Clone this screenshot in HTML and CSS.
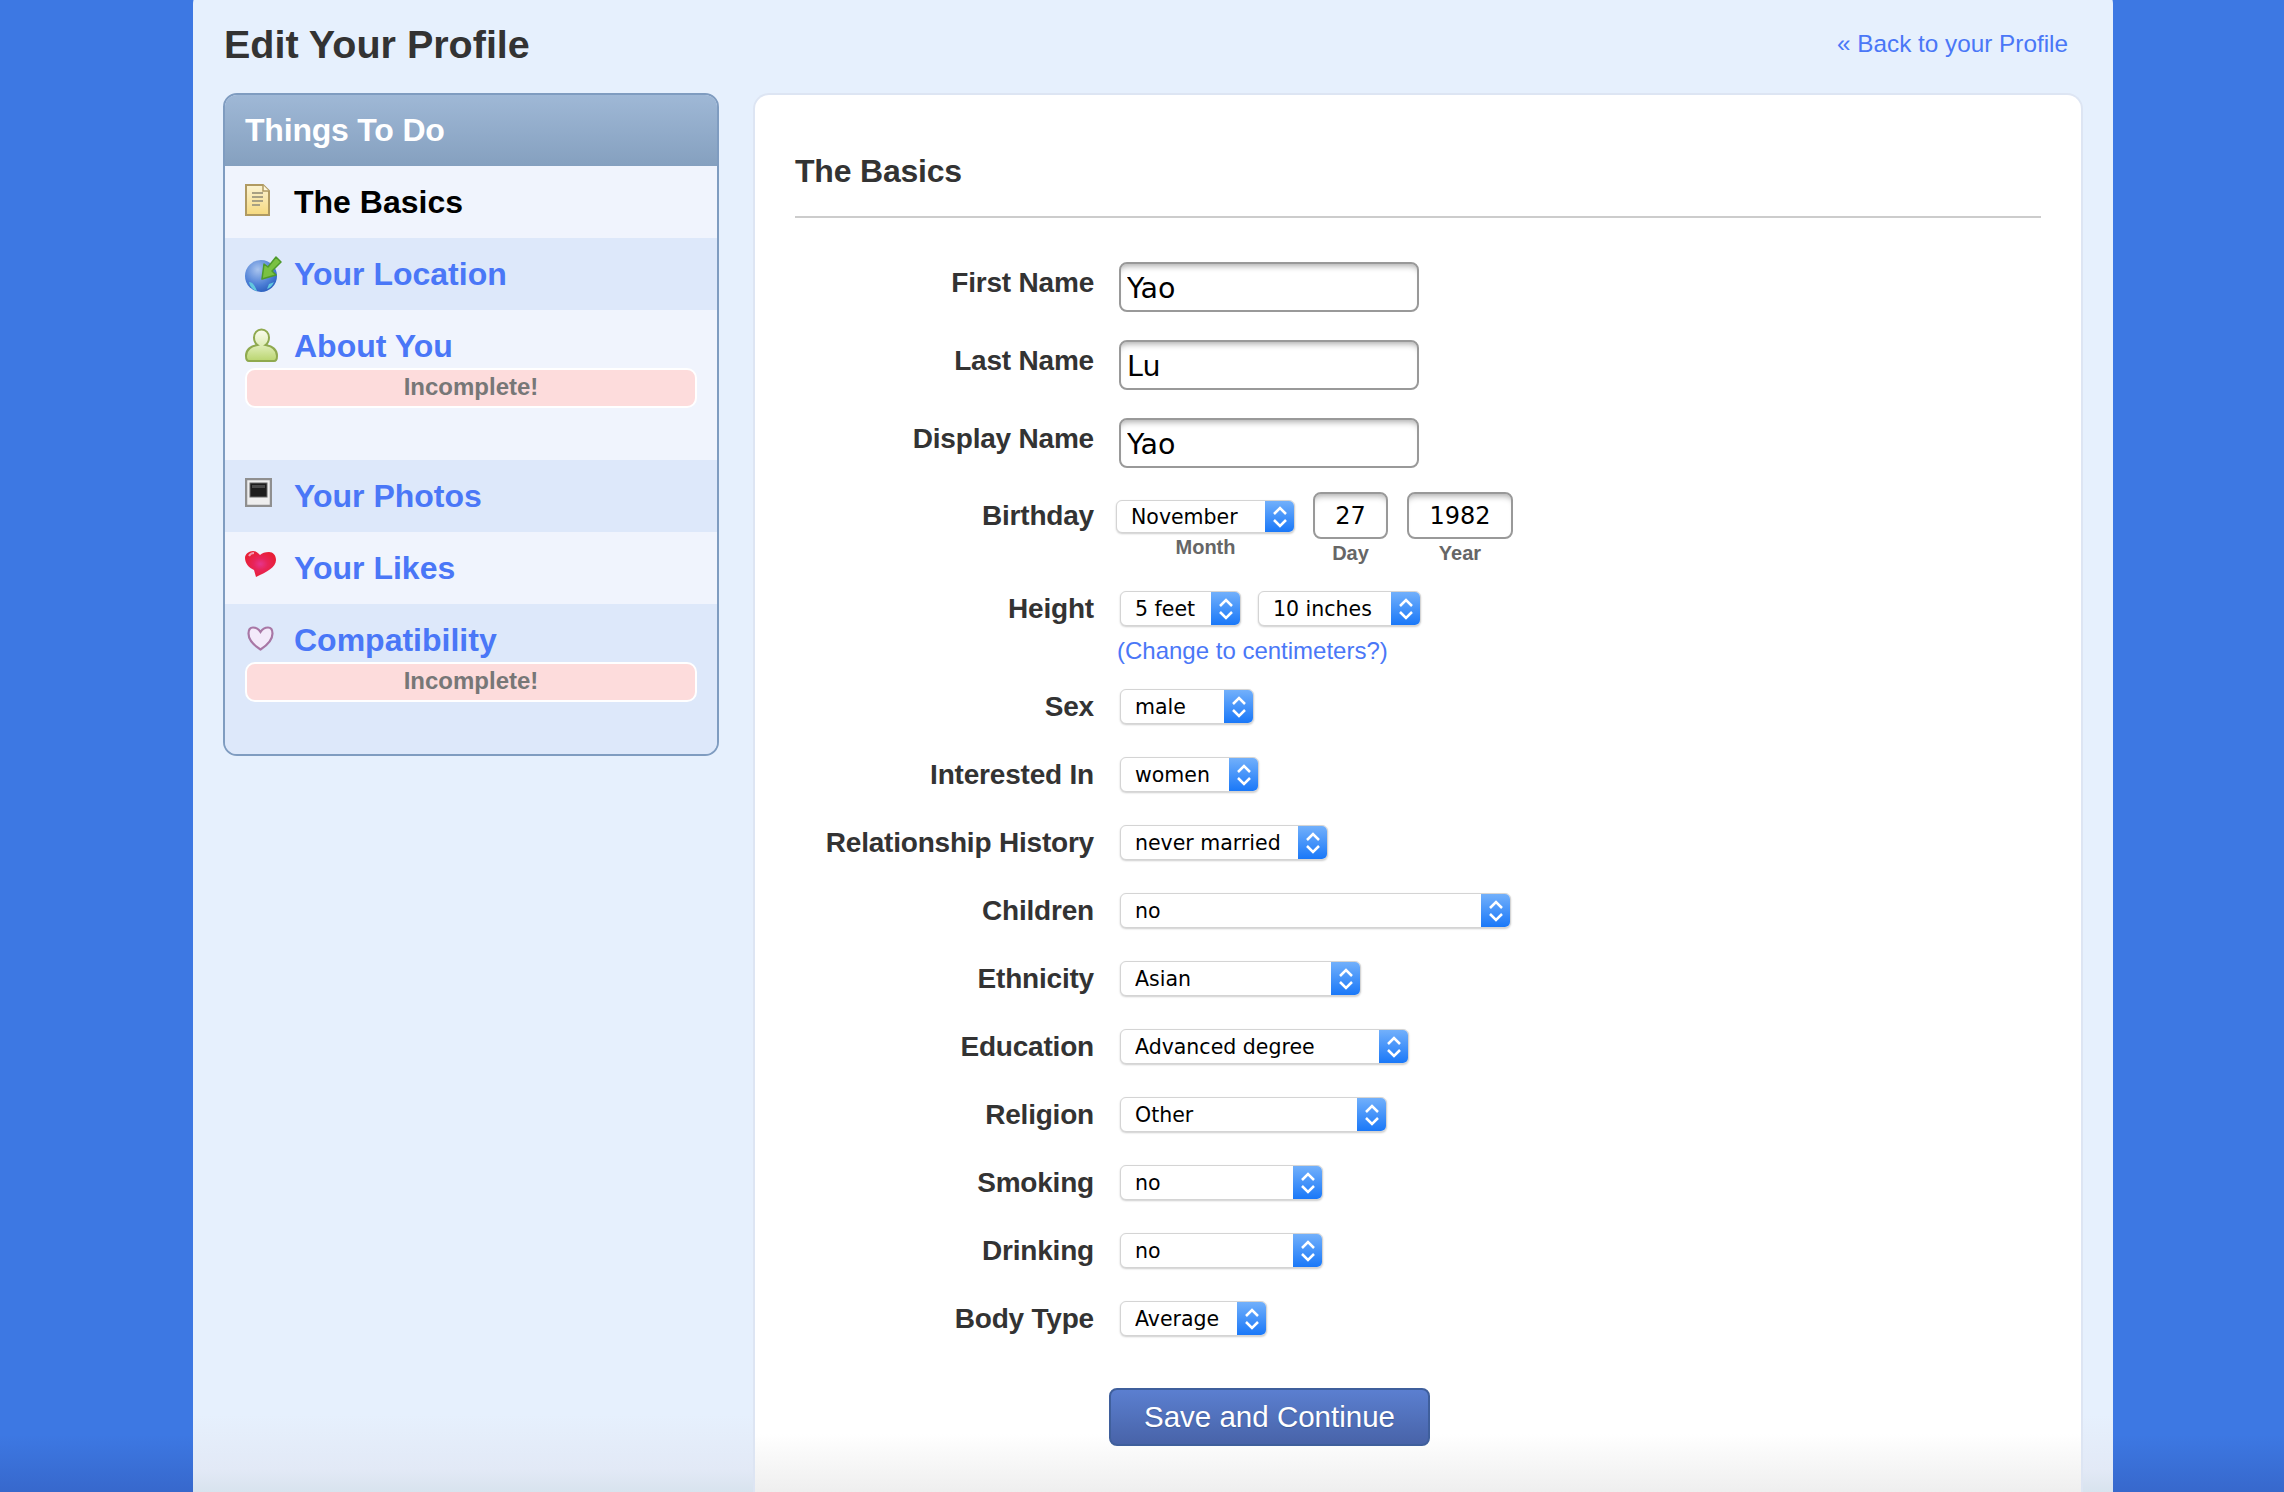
FILE: index.html
```html
<!DOCTYPE html>
<html lang="en">
<head>
  <title>Edit Your Profile</title>
  <link rel="stylesheet" href="styles.css">
</head>
<body>
  <div class="page">
    <div class="page-header">
      <h1>Edit Your Profile</h1>
      <a class="back-link" href="#">« Back to your Profile</a>
    </div>
    <div class="columns">
      <div class="todo">
        <div class="todo-title">Things To Do</div>
        <div class="todo-row current">
          <svg class="todo-icon" width="25" height="32" viewBox="0 0 25 32">
            <defs><linearGradient id="docfill" x1="0" y1="0" x2="0" y2="1"><stop offset="0" stop-color="#fbf3d2"/><stop offset="1" stop-color="#f6d97f"/></linearGradient></defs>
            <path d="M1 1H18L24 7V31H1Z" fill="url(#docfill)" stroke="#b09a62" stroke-width="2"/>
            <path d="M18 1V7H24" fill="#fdf6dc" stroke="#b09a62" stroke-width="1.5"/>
            <path d="M7 9H18M7 13H18M7 17H18M7 21H15" stroke="#a8a083" stroke-width="2"/>
          </svg>
          <span class="todo-name">The Basics</span>
        </div>
        <div class="todo-row alt">
          <svg class="todo-icon" width="37" height="36" viewBox="0 0 37 36">
            <defs><radialGradient id="globefill" cx="0.4" cy="0.3" r="0.8"><stop offset="0" stop-color="#a9c4ee"/><stop offset="0.6" stop-color="#4d7fd6"/><stop offset="1" stop-color="#2256b8"/></radialGradient></defs>
            <circle cx="16" cy="20" r="16" fill="url(#globefill)"/>
            <path d="M4 26C8 26 10 30 12 35C8 34 5 31 4 26ZM24 28C26 27 28 27 29 26C27 30 25 32 22 33Z" fill="#62c8de"/>
            <path d="M31 1L36 6L27 15L31 19L17 23L19 8L23 11Z" fill="#7ac142" stroke="#4f9a2c" stroke-width="1.5" stroke-linejoin="round"/>
          </svg>
          <a class="todo-name" href="#">Your Location</a>
        </div>
        <div class="todo-row tall">
          <svg class="todo-icon" width="33" height="34" viewBox="0 0 33 34">
            <defs><linearGradient id="manfill" x1="0" y1="0" x2="0" y2="1"><stop offset="0" stop-color="#fbfcf0"/><stop offset="0.55" stop-color="#dcebb0"/><stop offset="1" stop-color="#b9d56f"/></linearGradient></defs>
            <path d="M16.500 1.500C21 1.500 24 5 24 9.500C24 13 22.500 15.500 20.500 17C26 18 32 21 32 28C32 31 31 33 29 33H4C2 33 1 31 1 28C1 21 7 18 12.500 17C10.500 15.500 9 13 9 9.500C9 5 12 1.500 16.500 1.500Z" fill="url(#manfill)" stroke="#8fa94f" stroke-width="2"/>
          </svg>
          <a class="todo-name" href="#">About You</a>
          <div class="incomplete">Incomplete!</div>
        </div>
        <div class="todo-row alt">
          <svg class="todo-icon" width="27" height="29" viewBox="0 0 27 29">
            <rect x="1" y="1" width="25" height="27" fill="#eeeeee" stroke="#8f8f8f" stroke-width="2.500"/>
            <rect x="5" y="5" width="17" height="14" fill="#1c1c1c" stroke="#666"/>
            <rect x="7" y="7" width="13" height="3" fill="#4a4a4a"/>
          </svg>
          <a class="todo-name" href="#">Your Photos</a>
        </div>
        <div class="todo-row">
          <svg class="todo-icon" width="31" height="28" viewBox="0 0 31 28">
            <defs><radialGradient id="heartfill" cx="0.5" cy="0.5" r="0.5"><stop offset="0" stop-color="#e6358c"/><stop offset="0.45" stop-color="#e8245a"/><stop offset="1" stop-color="#e81f36"/></radialGradient></defs>
            <path d="M8 1C11 1 13 3 15 5C17 3 20 2 24 2C28 2 31 5 31 10C31 17 22 22 11 27L9 20C4 18 0 13 0 8C0 4 4 1 8 1Z" fill="url(#heartfill)"/>
            <path d="M4 6C5 4 7 3 9 3" stroke="#f39ab0" stroke-width="2" fill="none"/>
          </svg>
          <a class="todo-name" href="#">Your Likes</a>
        </div>
        <div class="todo-row alt tall last">
          <svg class="todo-icon outline-heart" width="27" height="25" viewBox="0 0 27 25">
            <path d="M13.500 6C11 2 8 1.500 6 1.500C3 1.500 1.500 4 1.500 7.500C1.500 14 8 20 13.500 23.500C19 20 25.500 14 25.500 7.500C25.500 4 24 1.500 21 1.500C19 1.500 16 2 13.500 6Z" fill="#f3eafa" stroke="#a877a5" stroke-width="2.200"/>
          </svg>
          <a class="todo-name" href="#">Compatibility</a>
          <div class="incomplete">Incomplete!</div>
        </div>
      </div>

      <div class="card">
        <h2>The Basics</h2>
        <form class="basics">
          <div class="field text-field">
            <label>First Name</label>
            <input class="text-input" type="text" value="Yao">
          </div>
          <div class="field text-field">
            <label>Last Name</label>
            <input class="text-input" type="text" value="Lu">
          </div>
          <div class="field text-field">
            <label>Display Name</label>
            <input class="text-input" type="text" value="Yao">
          </div>

          <div class="field birthday">
            <label>Birthday</label>
            <div class="date-parts">
              <div class="date-part month">
                <div class="select w-month">
                  <select><option>November</option></select>
                  <span class="arrows"><svg width="16" height="24" viewBox="0 0 16 24"><path d="M2 9L8 3L14 9M2 15L8 21L14 15"/></svg></span>
                </div>
                <span class="sublabel">Month</span>
              </div>
              <div class="date-part">
                <input class="date-input day" type="text" value="27">
                <span class="sublabel">Day</span>
              </div>
              <div class="date-part">
                <input class="date-input year" type="text" value="1982">
                <span class="sublabel">Year</span>
              </div>
            </div>
          </div>

          <div class="field height">
            <label>Height</label>
            <div>
              <div class="height-selects">
                <div class="select w-feet">
                  <select><option>5 feet</option></select>
                  <span class="arrows"><svg width="16" height="24" viewBox="0 0 16 24"><path d="M2 9L8 3L14 9M2 15L8 21L14 15"/></svg></span>
                </div>
                <div class="select w-inches">
                  <select><option>10 inches</option></select>
                  <span class="arrows"><svg width="16" height="24" viewBox="0 0 16 24"><path d="M2 9L8 3L14 9M2 15L8 21L14 15"/></svg></span>
                </div>
              </div>
              <a class="unit-link" href="#">(Change to centimeters?)</a>
            </div>
          </div>

          <div class="field">
            <label>Sex</label>
            <div class="select w-sex">
              <select><option>male</option></select>
              <span class="arrows"><svg width="16" height="24" viewBox="0 0 16 24"><path d="M2 9L8 3L14 9M2 15L8 21L14 15"/></svg></span>
            </div>
          </div>
          <div class="field">
            <label>Interested In</label>
            <div class="select w-interest">
              <select><option>women</option></select>
              <span class="arrows"><svg width="16" height="24" viewBox="0 0 16 24"><path d="M2 9L8 3L14 9M2 15L8 21L14 15"/></svg></span>
            </div>
          </div>
          <div class="field">
            <label>Relationship History</label>
            <div class="select w-history">
              <select><option>never married</option></select>
              <span class="arrows"><svg width="16" height="24" viewBox="0 0 16 24"><path d="M2 9L8 3L14 9M2 15L8 21L14 15"/></svg></span>
            </div>
          </div>
          <div class="field">
            <label>Children</label>
            <div class="select w-children">
              <select><option>no</option></select>
              <span class="arrows"><svg width="16" height="24" viewBox="0 0 16 24"><path d="M2 9L8 3L14 9M2 15L8 21L14 15"/></svg></span>
            </div>
          </div>
          <div class="field">
            <label>Ethnicity</label>
            <div class="select w-ethnicity">
              <select><option>Asian</option></select>
              <span class="arrows"><svg width="16" height="24" viewBox="0 0 16 24"><path d="M2 9L8 3L14 9M2 15L8 21L14 15"/></svg></span>
            </div>
          </div>
          <div class="field">
            <label>Education</label>
            <div class="select w-education">
              <select><option>Advanced degree</option></select>
              <span class="arrows"><svg width="16" height="24" viewBox="0 0 16 24"><path d="M2 9L8 3L14 9M2 15L8 21L14 15"/></svg></span>
            </div>
          </div>
          <div class="field">
            <label>Religion</label>
            <div class="select w-religion">
              <select><option>Other</option></select>
              <span class="arrows"><svg width="16" height="24" viewBox="0 0 16 24"><path d="M2 9L8 3L14 9M2 15L8 21L14 15"/></svg></span>
            </div>
          </div>
          <div class="field">
            <label>Smoking</label>
            <div class="select w-habit">
              <select><option>no</option></select>
              <span class="arrows"><svg width="16" height="24" viewBox="0 0 16 24"><path d="M2 9L8 3L14 9M2 15L8 21L14 15"/></svg></span>
            </div>
          </div>
          <div class="field">
            <label>Drinking</label>
            <div class="select w-habit">
              <select><option>no</option></select>
              <span class="arrows"><svg width="16" height="24" viewBox="0 0 16 24"><path d="M2 9L8 3L14 9M2 15L8 21L14 15"/></svg></span>
            </div>
          </div>
          <div class="field">
            <label>Body Type</label>
            <div class="select w-body">
              <select><option>Average</option></select>
              <span class="arrows"><svg width="16" height="24" viewBox="0 0 16 24"><path d="M2 9L8 3L14 9M2 15L8 21L14 15"/></svg></span>
            </div>
          </div>

          <button class="save" type="submit">Save and Continue</button>
        </form>
      </div>
    </div>
  </div>
</body>
</html>
```

FILE: styles.css
```css
html, body {
  height: 100%;
}
body {
  margin: 0;
  height: 1492px;
  overflow: hidden;
  background: linear-gradient(#3d78e3 1435px, #3768cc);
  font-family: "Liberation Sans", Arial, sans-serif;
  color: #333;
}
a {
  color: #4a77f7;
  text-decoration: none;
}

/* panel starts above the window, only the corner curve shows */
.page {
  width: 1920px;
  height: 1504px;
  margin: -12px 0 0 193px;
  padding: 12px 30px 0;
  box-sizing: border-box;
  border-radius: 16px 16px 0 0;
  background: linear-gradient(#e6f0fd 1427px, #e2e9f6 1482px, #d8e3ee);
  overflow: hidden;
}
.page-header {
  display: flex;
  justify-content: space-between;
  align-items: center;
  height: 93px;
  padding: 0 15px 5px 1px;
  box-sizing: border-box;
}
h1 {
  margin: 0;
  font-size: 39.5px;
  font-weight: bold;
  color: #333;
}
.back-link {
  font-size: 24.3px;
}

.columns {
  display: flex;
  gap: 34px;
  align-items: flex-start;
}

/* sidebar */
.todo {
  width: 496px;
  height: 663px;
  box-sizing: border-box;
  border: 2px solid #7f9cc0;
  border-radius: 14px;
  background-color: #dde8fa;
  overflow: hidden;
}
.todo-title {
  height: 71px;
  padding: 0 20px;
  line-height: 71px;
  font-size: 32px;
  font-weight: bold;
  letter-spacing: -0.2px;
  color: #fff;
  background: linear-gradient(#9fb8d6, #85a0bf);
}
.todo-row {
  position: relative;
  height: 72px;
  padding: 0 20px 0 69px;
  box-sizing: border-box;
  background-color: #f0f4fd;
}
.todo-row.alt {
  background-color: #dde8fa;
}
.todo-row.tall {
  height: 150px;
}
.todo-row.last {
  height: 152px;
}
.todo-name {
  display: block;
  line-height: 72px;
  font-size: 32px;
  font-weight: bold;
  color: #4a77f7;
}
.current .todo-name {
  color: #000;
}
.todo-icon {
  position: absolute;
  left: 20px;
  top: 18px;
  filter: blur(0.4px);
}
.outline-heart {
  left: 22px;
  top: 22px;
}
.incomplete {
  width: 452px;
  height: 40px;
  margin: -14px 0 0 -49px;
  box-sizing: border-box;
  border: 2px solid #fff;
  border-radius: 10px;
  background-color: #fddcdc;
  line-height: 34px;
  text-align: center;
  font-size: 24px;
  font-weight: bold;
  color: #777;
}

/* main card */
.card {
  width: 1330px;
  height: 1420px;
  padding: 42px 40px 0;
  box-sizing: border-box;
  border: 2px solid #dde5f3;
  border-bottom: none;
  border-radius: 16px 16px 0 0;
  background: linear-gradient(#fff 1339px, #eee 1399px);
}
h2 {
  margin: 0;
  height: 64px;
  padding-top: 15px;
  border-bottom: 2px solid #ccc;
  font-size: 32px;
  font-weight: bold;
  letter-spacing: -0.2px;
  line-height: 38px;
  color: #333;
}
.basics {
  padding-top: 44px;
}
.field {
  display: flex;
  gap: 25px;
  margin-bottom: 33px;
}
.field label {
  flex: none;
  width: 299px;
  text-align: right;
  font-size: 28px;
  font-weight: bold;
  letter-spacing: -0.2px;
  line-height: 35px;
  color: #333;
}
.text-field {
  margin-bottom: 28px;
}
.text-field label {
  line-height: 41px;
}
.text-input {
  width: 300px;
  height: 50px;
  padding: 3px 6px 0;
  box-sizing: border-box;
  border: 2px solid #999;
  border-radius: 8px;
  box-shadow: inset 0 7px 6px -5px #aaa;
  font-family: "DejaVu Sans", sans-serif;
  font-size: 28.500px;
  color: #000;
  background-color: #fff;
}

.birthday {
  margin-top: -4px;
  margin-bottom: 26px;
}
.birthday label {
  padding-top: 6px;
}
.date-parts {
  display: flex;
  gap: 18px;
  margin-left: -3px;
}
.date-part {
  display: flex;
  flex-direction: column;
  align-items: center;
}
.date-part + .date-part + .date-part {
  margin-left: 1px;
}
.month {
  padding-top: 8px;
}
.date-input {
  height: 47px;
  padding: 0;
  box-sizing: border-box;
  border: 2px solid #999;
  border-radius: 8px;
  box-shadow: inset 0 7px 6px -5px #aaa;
  text-align: center;
  font-family: "DejaVu Sans", sans-serif;
  font-size: 24px;
  color: #000;
}
.day {
  width: 75px;
}
.year {
  width: 106px;
}
.sublabel {
  margin-top: 2px;
  line-height: 24px;
  font-size: 20px;
  font-weight: bold;
  color: #666;
}

/* select boxes */
.select {
  display: flex;
  flex: none;
  height: 35px;
  box-sizing: border-box;
  border: 1px solid #d4d4d4;
  border-radius: 6px;
  box-shadow: 0 1px 2px rgba(0, 0, 0, 0.2);
  background-color: #fff;
  overflow: hidden;
}
.field > .select,
.height-selects {
  margin-left: 1px;
}
.select select {
  flex: 1;
  min-width: 0;
  padding: 0 0 0 14px;
  border: none;
  background: none;
  appearance: none;
  -webkit-appearance: none;
  font-family: "DejaVu Sans", sans-serif;
  font-size: 20.500px;
  color: #000;
}
.arrows {
  display: flex;
  flex: none;
  align-items: center;
  justify-content: center;
  width: 29px;
  background: linear-gradient(#72b0fb, #1a78f8);
}
.arrows path {
  fill: none;
  stroke: #fff;
  stroke-width: 2.5;
}
.month .select {
  height: 33px;
}
.w-month { width: 179px; }
.w-feet { width: 121px; }
.w-inches { width: 163px; }
.w-sex { width: 134px; }
.w-interest { width: 139px; }
.w-history { width: 208px; }
.w-children { width: 391px; }
.w-ethnicity { width: 241px; }
.w-education { width: 289px; }
.w-religion { width: 267px; }
.w-habit { width: 203px; }
.w-body { width: 147px; }

.height {
  margin-bottom: 25px;
}
.height-selects {
  display: flex;
  gap: 17px;
}
.unit-link {
  display: block;
  margin: 11px 0 0 -2px;
  line-height: 27px;
  font-size: 24px;
}

.save {
  display: block;
  width: 321px;
  height: 58px;
  margin: 52px 0 0 314px;
  border: 2px solid #3f5f9c;
  border-radius: 8px;
  background: linear-gradient(#5b7fd0, #4863a8);
  text-shadow: 0 1px 1px #3f5a96;
  font-family: "Liberation Sans", Arial, sans-serif;
  font-size: 29.500px;
  color: #fff;
}
```
